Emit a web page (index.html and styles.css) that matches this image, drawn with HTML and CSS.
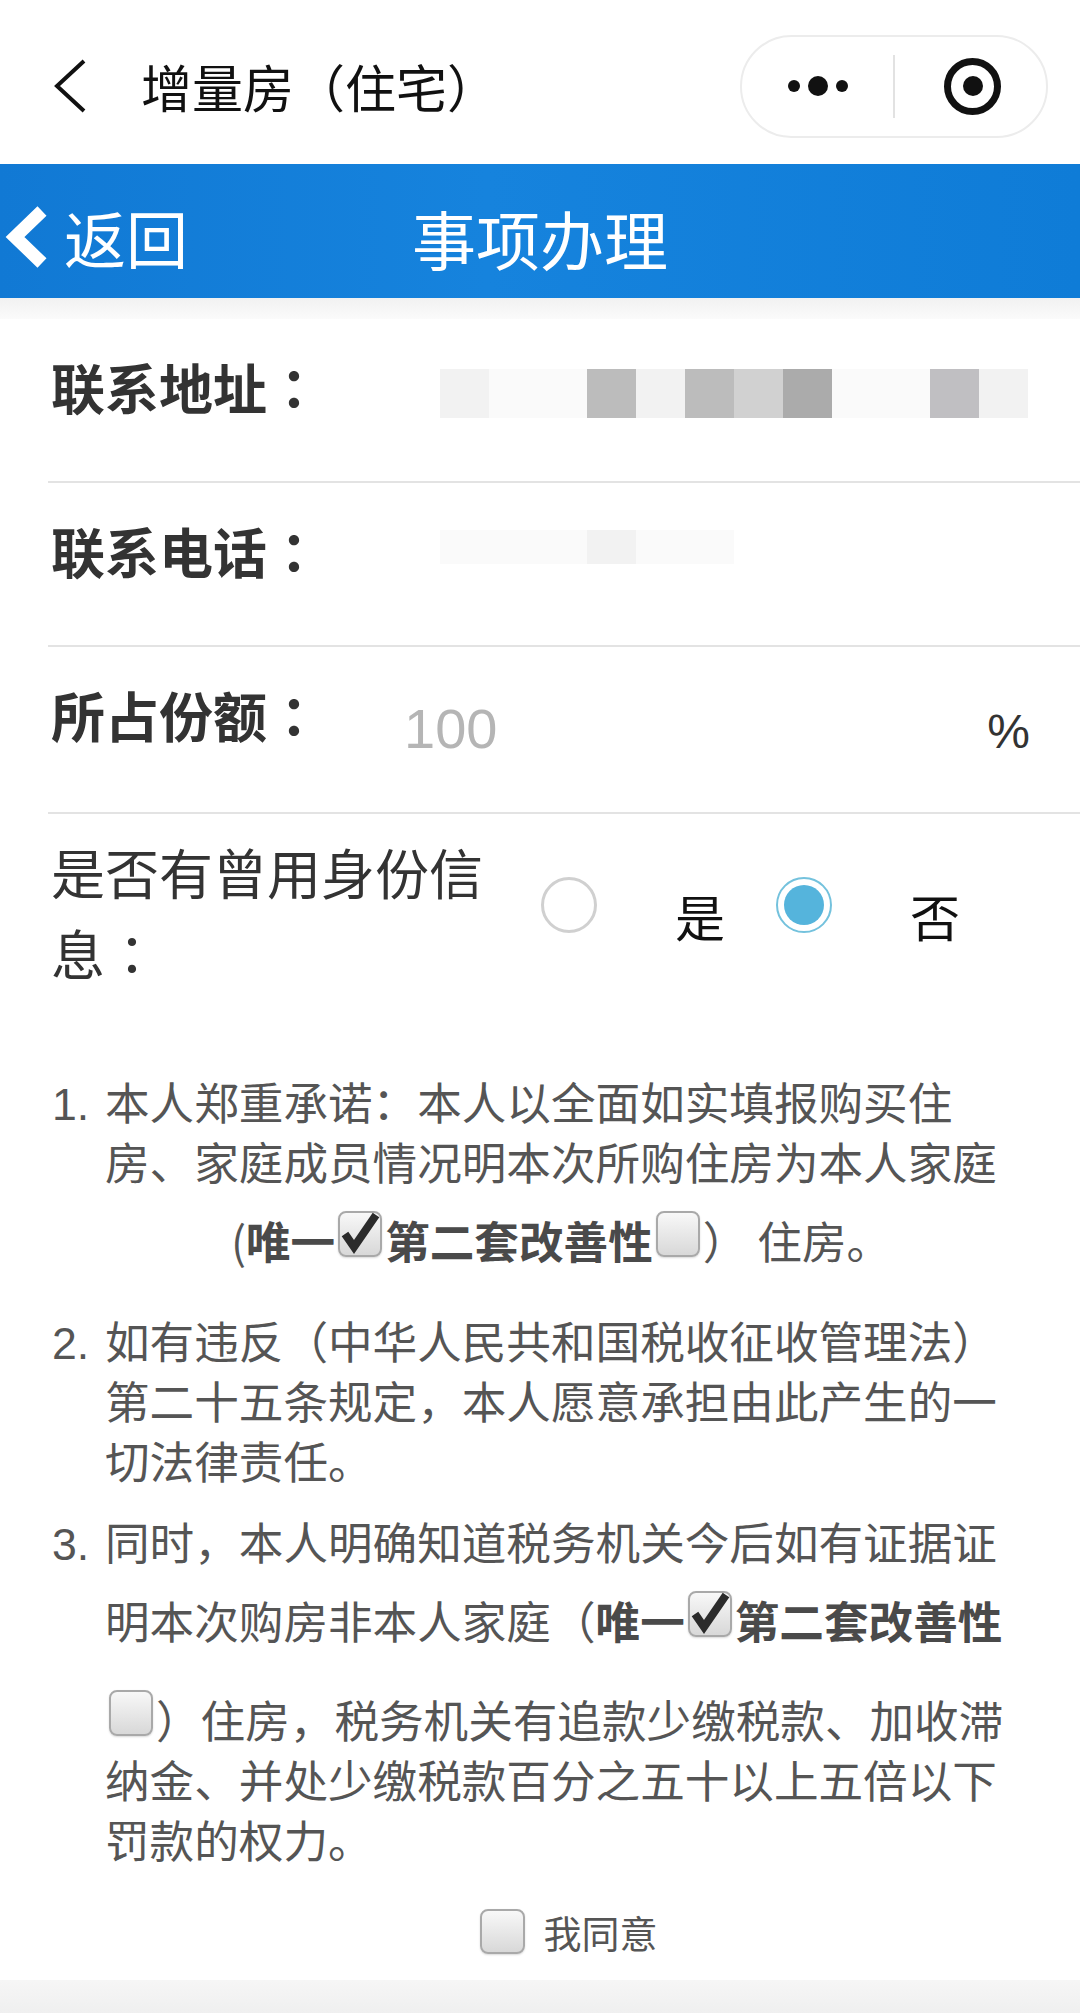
FILE: index.html
```html
<!DOCTYPE html>
<html lang="zh-CN">
<head>
  <meta charset="utf-8">
  <title>增量房（住宅）</title>
  <link rel="stylesheet" href="styles.css">
</head>
<body>
  <div id="topbar">
    <svg class="topbar-back" width="34" height="56" viewBox="0 0 34 56">
      <polyline points="31,3 4,28 31,53" fill="none" stroke="#111" stroke-width="4"/>
    </svg>
    <span class="topbar-title">增量房（住宅）</span>
    <div class="capsule">
      <div class="capsule-more"><i class="dot"></i><i class="dot big"></i><i class="dot"></i></div>
      <div class="capsule-line"></div>
      <div class="capsule-close"><span class="target"><i></i></span></div>
    </div>
  </div>

  <div id="navbar">
    <a class="nav-back" href="#">
      <svg width="46" height="64" viewBox="0 0 46 64">
        <polyline points="38,6 11,32 38,58" fill="none" stroke="#fff" stroke-width="13"/>
      </svg>返回</a>
    <h1>事项办理</h1>
    <span></span>
  </div>
  <div class="shade"></div>

  <div id="form">
    <div class="row">
      <label class="row-label">联系地址<span class="colon" lang="zh-TW">：</span></label>
      <div class="mask">
        <i class="t1"></i><i class="t0"></i><i class="t0"></i><i class="t3"></i><i class="t1"></i><i class="t3"></i>
        <i class="t2"></i><i class="t4"></i><i class="t0"></i><i class="t0"></i><i class="t5"></i><i class="t1"></i>
      </div>
    </div>
    <div class="row">
      <label class="row-label">联系电话<span class="colon" lang="zh-TW">：</span></label>
      <div class="mask mask-faint">
        <i class="t0"></i><i class="t0"></i><i class="t0"></i><i class="t1"></i><i class="t0"></i><i class="t0"></i>
      </div>
    </div>
    <div class="row">
      <label class="row-label">所占份额<span class="colon" lang="zh-TW">：</span></label>
      <div class="row-value">
        <span class="value-num">100</span>
        <span class="value-unit">%</span>
      </div>
    </div>
    <div class="row row-radio">
      <label class="row-label">是否有曾用身份信息<span class="colon" lang="zh-TW">：</span></label>
      <div class="radio-group">
        <span class="radio"></span><span class="radio-text">是</span>
        <span class="radio checked"></span><span class="radio-text">否</span>
      </div>
    </div>
  </div>

  <div id="notes">
    <div class="note">
      <span class="note-num">1.</span>
      <div class="note-body">本人郑重承诺：本人以全面如实填报购买住房、家庭成员情况明本次所购住房为本人家庭
        <div class="note-choice">(<b>唯一</b><span class="tick"><svg width="44" height="46" viewBox="0 0 44 46"><polyline points="7,23 16,36 38,4" fill="none" stroke="#2b2b2b" stroke-width="8"/></svg></span><b>第二套改善性</b><span class="tick"></span>） 住房。</div>
      </div>
    </div>
    <div class="note">
      <span class="note-num">2.</span>
      <div class="note-body">如有违反（中华人民共和国税收征收管理法）第二十五条规定，本人愿意承担由此产生的一切法律责任。</div>
    </div>
    <div class="note">
      <span class="note-num">3.</span>
      <div class="note-body">同时，本人明确知道税务机关今后如有证据证明本次购房非本人家庭（<b>唯一</b><span class="tick"><svg width="44" height="46" viewBox="0 0 44 46"><polyline points="7,23 16,36 38,4" fill="none" stroke="#2b2b2b" stroke-width="8"/></svg></span><b>第二套改善性</b><span class="tick lead"></span>）住房，税务机关有追款少缴税款、加收滞纳金、并处少缴税款百分之五十以上五倍以下罚款的权力。</div>
    </div>
  </div>

  <div class="agree">
    <span class="agree-box"></span>
    <span class="agree-text">我同意</span>
  </div>
  <div class="bottom-strip"></div>
</body>
</html>
```

FILE: styles.css
```css
html, body {
  margin: 0;
  padding: 0;
}

body {
  width: 1080px;
  background: #fff;
  font-family: "Noto Sans CJK SC", sans-serif;
  color: #333;
}

/* top bar */
#topbar {
  display: flex;
  align-items: center;
  box-sizing: border-box;
  height: 164px;
  padding: 8px 0 0 53px;
  background: #fff;
}

.topbar-title {
  margin-left: 54px;
  font-size: 51px;
  color: #111;
}

.capsule {
  display: flex;
  align-items: center;
  box-sizing: border-box;
  width: 308px;
  height: 103px;
  margin-left: auto;
  margin-right: 32px;
  border: 2px solid #ececec;
  border-radius: 52px;
}

.capsule-more,
.capsule-close {
  flex: 1;
  display: flex;
  align-items: center;
  justify-content: center;
}

.capsule-more {
  gap: 8px;
}

.dot {
  width: 12px;
  height: 12px;
  border-radius: 50%;
  background: #111;
}

.dot.big {
  width: 20px;
  height: 20px;
}

.capsule-line {
  width: 2px;
  height: 63px;
  background: #e2e2e2;
}

.target {
  display: flex;
  align-items: center;
  justify-content: center;
  box-sizing: border-box;
  width: 57px;
  height: 57px;
  margin-left: 4px;
  border: 7px solid #111;
  border-radius: 50%;
}

.target i {
  width: 20px;
  height: 20px;
  border-radius: 50%;
  background: #111;
}

/* blue bar */
#navbar {
  display: grid;
  grid-template-columns: 1fr auto 1fr;
  align-items: center;
  box-sizing: border-box;
  height: 134px;
  padding-top: 12px;
  background: linear-gradient(90deg, #1179d4 0%, #1683dd 45%, #0f7cd7 100%);
  color: #fff;
}

.nav-back {
  display: flex;
  align-items: center;
  padding-left: 4px;
  font-size: 62px;
  color: #fff;
  text-decoration: none;
}

.nav-back svg {
  margin-right: 14px;
}

#navbar h1 {
  margin: 0;
  font-size: 64px;
  font-weight: normal;
}

.shade {
  height: 21px;
  background: linear-gradient(#f1f1f1, #fbfbfb);
}

/* form rows */
#form {
  margin-left: 48px;
}

.row {
  display: flex;
  padding: 27px 0 54px;
  border-bottom: 2px solid #e3e3e3;
}

.row-label {
  flex-shrink: 0;
  box-sizing: border-box;
  width: 352px;
  padding-left: 3px;
  font-size: 54px;
  line-height: 81px;
  font-weight: bold;
  color: #333;
}

.colon {
  font-family: "Noto Sans CJK TC", sans-serif;
}

.mask {
  display: flex;
  margin: 23px 0 0 40px;
}

.mask i {
  width: 49px;
  height: 49px;
}

.mask-faint {
  margin-top: 20px;
}

.mask-faint i {
  height: 34px;
}

.t0 { background: #fafafa; }
.t1 { background: #f2f2f2; }
.t2 { background: #d1d1d1; }
.t3 { background: #bcbcbc; }
.t4 { background: #ababab; }
.t5 { background: #c0bfc2; }

.row-value {
  flex: 1;
  display: flex;
  justify-content: space-between;
  align-items: baseline;
  margin: 14px 50px -14px 4px;
  font-family: "Liberation Sans", sans-serif;
  line-height: 81px;
}

.value-num {
  font-size: 56px;
  color: #b5b5b5;
}

.value-unit {
  font-size: 48px;
  color: #333;
}

.row-radio {
  padding: 17px 0 0;
  border-bottom: none;
}

.row-radio .row-label {
  width: 464px;
  font-weight: normal;
}

.radio-group {
  display: flex;
  align-items: center;
  align-self: flex-start;
  margin: 36px 0 0 29px;
}

.radio {
  box-sizing: border-box;
  width: 56px;
  height: 56px;
  border: 3px solid #d0d0d0;
  border-radius: 50%;
  background: #fff;
}

.radio.checked {
  border: 2px solid #74c2dd;
  padding: 6px;
  background: #55b4dc;
  background-clip: content-box;
}

.radio-text {
  margin: 0 51px 0 78px;
  padding-top: 20px;
  font-size: 50px;
  line-height: 56px;
  color: #111;
}

/* promises */
#notes {
  margin-top: 78px;
  padding-left: 52px;
}

.note {
  display: flex;
  align-items: baseline;
  margin-bottom: 21px;
  font-size: 44.6px;
  line-height: 60px;
  color: #555;
}

.note-num {
  flex-shrink: 0;
  width: 53px;
  font-family: "Liberation Sans", sans-serif;
}

.note-body {
  width: 912px;
}

.note-body b {
  color: #4a4a4a;
}

.note-choice {
  margin-bottom: 19px;
  text-align: center;
}

.tick {
  display: inline-block;
  box-sizing: border-box;
  width: 44px;
  height: 46px;
  margin: 20px 3px 0;
  vertical-align: 2px;
  border: 2px solid #a9a9a9;
  border-radius: 8px;
  background: linear-gradient(#f8f8f8, #d8d8d8);
  box-shadow: 0 1px 2px rgba(0, 0, 0, 0.15);
}

.tick svg {
  display: block;
  margin: -2px 0 0 -2px;
  overflow: visible;
}

.tick.lead {
  margin-top: 40px;
  margin-left: 4px;
}

/* agree */
.agree {
  display: flex;
  align-items: center;
  justify-content: center;
  margin-top: 40px;
  padding-left: 58px;
}

.agree-box {
  box-sizing: border-box;
  width: 45px;
  height: 45px;
  margin-right: 18px;
  border: 2px solid #a9a9a9;
  border-radius: 8px;
  background: linear-gradient(#f8f8f8, #d8d8d8);
  box-shadow: 0 1px 2px rgba(0, 0, 0, 0.15);
}

.agree-text {
  font-size: 38px;
  line-height: 45px;
  color: #555;
}

.bottom-strip {
  height: 40px;
  margin-top: 26px;
  background: linear-gradient(#f6f6f6, #eeeeee);
}
```
